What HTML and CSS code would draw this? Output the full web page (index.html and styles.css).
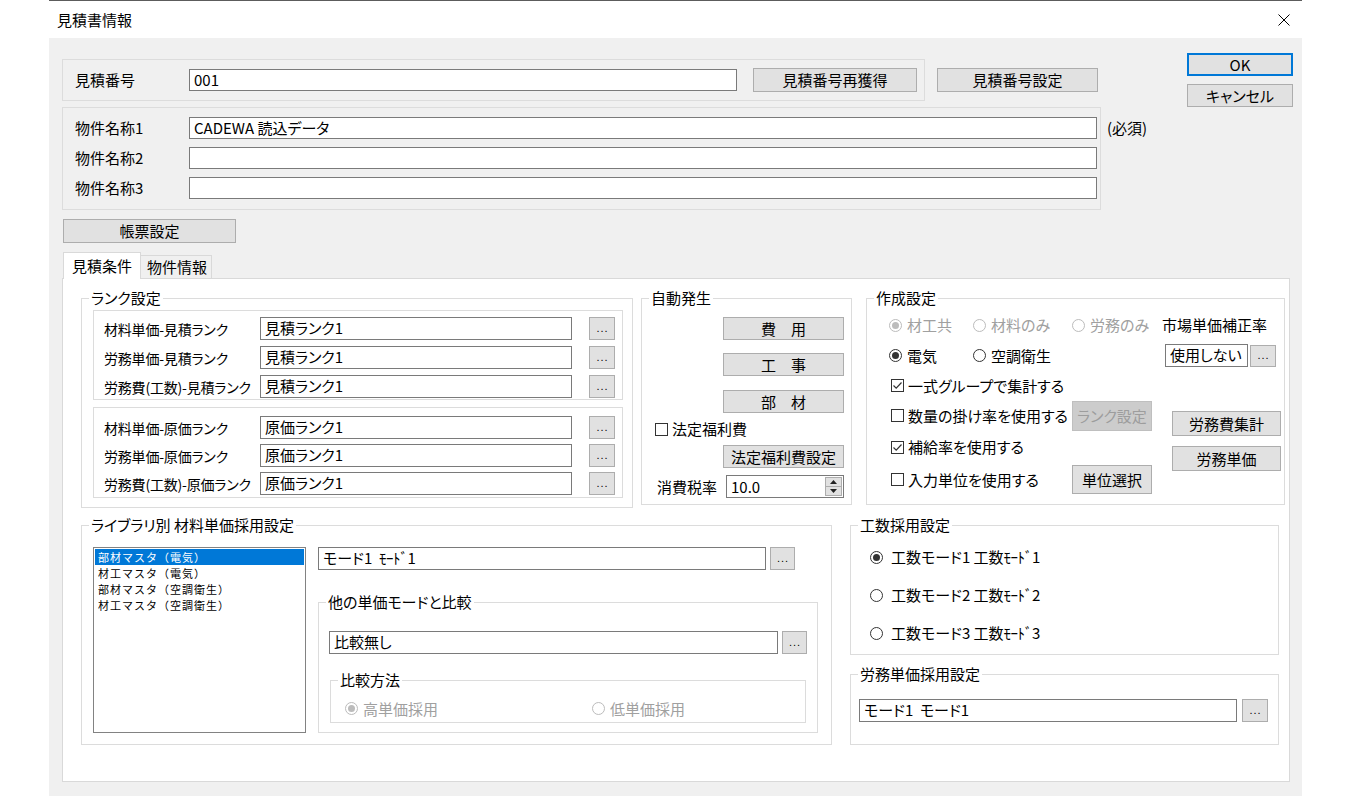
FILE: index.html
```html
<!DOCTYPE html>
<html lang="ja">
<head>
<meta charset="utf-8">
<title>見積書情報</title>
<link rel="stylesheet" href="styles.css">
</head>
<body>
<div class="window">
  <div class="titlebar">
    <span class="title">見積書情報</span>
    <svg class="close" width="12" height="12" viewBox="0 0 12 12"><path d="M0.5 0.5 L11.5 11.5 M11.5 0.5 L0.5 11.5" stroke="#000" stroke-width="1" fill="none"/></svg>
  </div>
  <div class="client">
    <div class="top">
      <div class="top-main">
        <div class="row-no">
          <div class="box box-no">
            <span class="lbl">見積番号</span>
            <div class="edit edit-no">001</div>
            <div class="btn btn-reget">見積番号再獲得</div>
          </div>
          <div class="btn btn-noset">見積番号設定</div>
        </div>
        <div class="row-name">
          <div class="box box-name">
            <div class="name-row"><span class="lbl">物件名称1</span><div class="edit edit-name">CADEWA 読込データ</div></div>
            <div class="name-row"><span class="lbl">物件名称2</span><div class="edit edit-name"></div></div>
            <div class="name-row"><span class="lbl">物件名称3</span><div class="edit edit-name"></div></div>
          </div>
          <span class="req">(必須)</span>
        </div>
        <div class="btn btn-form">帳票設定</div>
      </div>
      <div class="top-side">
        <div class="btn btn-ok">OK</div>
        <div class="btn btn-cancel">キャンセル</div>
      </div>
    </div>

    <div class="tabs">
      <div class="tab tab-active">見積条件</div>
      <div class="tab">物件情報</div>
    </div>

    <div class="pane">
      <div class="row1">
        <div class="group g-rank">
          <span class="gt">ランク設定</span>
          <div class="subbox sb-a">
            <div class="rrow"><span class="lbl">材料単価-見積ランク</span><div class="edit">見積ランク1</div><div class="ell">...</div></div>
            <div class="rrow"><span class="lbl">労務単価-見積ランク</span><div class="edit">見積ランク1</div><div class="ell">...</div></div>
            <div class="rrow"><span class="lbl">労務費(工数)-見積ランク</span><div class="edit">見積ランク1</div><div class="ell">...</div></div>
          </div>
          <div class="subbox sb-b">
            <div class="rrow"><span class="lbl">材料単価-原価ランク</span><div class="edit">原価ランク1</div><div class="ell">...</div></div>
            <div class="rrow"><span class="lbl">労務単価-原価ランク</span><div class="edit">原価ランク1</div><div class="ell">...</div></div>
            <div class="rrow"><span class="lbl">労務費(工数)-原価ランク</span><div class="edit">原価ランク1</div><div class="ell">...</div></div>
          </div>
        </div>

        <div class="group g-auto">
          <span class="gt">自動発生</span>
          <div class="btn bw">費　用</div>
          <div class="btn bw bw2">工　事</div>
          <div class="btn bw bw3">部　材</div>
          <span class="check chk-welfare"><i class="cb"></i>法定福利費</span>
          <div class="btn bw bw-welfare">法定福利費設定</div>
          <div class="tax">
            <span class="lbl">消費税率</span>
            <div class="spin">
              <span class="spin-text">10.0</span>
              <span class="spin-btns">
                <span class="sp-up"><svg width="7" height="4" viewBox="0 0 7 4"><path d="M0 4 L3.5 0 L7 4 Z" fill="#222"/></svg></span>
                <span class="sp-dn"><svg width="7" height="4" viewBox="0 0 7 4"><path d="M0 0 L3.5 4 L7 0 Z" fill="#222"/></svg></span>
              </span>
            </div>
          </div>
        </div>

        <div class="group g-make">
          <span class="gt">作成設定</span>
          <span class="radio dis checked r1c1"><i class="rb"></i>材工共</span>
          <span class="radio dis r1c2"><i class="rb"></i>材料のみ</span>
          <span class="radio dis r1c3"><i class="rb"></i>労務のみ</span>
          <span class="lbl r1c4">市場単価補正率</span>
          <span class="radio checked r2c1"><i class="rb"></i>電気</span>
          <span class="radio r2c2"><i class="rb"></i>空調衛生</span>
          <div class="market r2c4"><div class="edit">使用しない</div><div class="ell">...</div></div>
          <span class="check on r3"><i class="cb"><svg width="11" height="11" viewBox="0 0 11 11"><path d="M1.5 5.5 L4.2 8.2 L9.5 2.5" stroke="#333" stroke-width="1.2" fill="none"/></svg></i>一式グループで集計する</span>
          <span class="check r4"><i class="cb"></i>数量の掛け率を使用する</span>
          <div class="btn dis btn-rank r4c3">ランク設定</div>
          <span class="check on r5"><i class="cb"><svg width="11" height="11" viewBox="0 0 11 11"><path d="M1.5 5.5 L4.2 8.2 L9.5 2.5" stroke="#333" stroke-width="1.2" fill="none"/></svg></i>補給率を使用する</span>
          <span class="check r6"><i class="cb"></i>入力単位を使用する</span>
          <div class="btn btn-unit r6c3">単位選択</div>
          <div class="labor-btns">
            <div class="btn">労務費集計</div>
            <div class="btn">労務単価</div>
          </div>
        </div>
      </div>

      <div class="row2">
        <div class="group g-lib">
          <span class="gt">ライブラリ別 材料単価採用設定</span>
          <div class="listbox">
            <div class="li sel">部材マスタ（電気）</div>
            <div class="li">材工マスタ（電気）</div>
            <div class="li">部材マスタ（空調衛生）</div>
            <div class="li">材工マスタ（空調衛生）</div>
          </div>
          <div class="lib-right">
            <div class="mode-row"><div class="edit">モード1&nbsp;&nbsp;<span class="hw">ﾓｰﾄﾞ1</span></div><div class="ell">...</div></div>
            <div class="group g-compare">
              <span class="gt">他の単価モードと比較</span>
              <div class="cmp-row"><div class="edit">比較無し</div><div class="ell">...</div></div>
              <div class="group g-method">
                <span class="gt">比較方法</span>
                <span class="radio dis checked m1"><i class="rb"></i>高単価採用</span>
                <span class="radio dis"><i class="rb"></i>低単価採用</span>
              </div>
            </div>
          </div>
        </div>

        <div class="rcol">
          <div class="group g-kosu">
            <span class="gt">工数採用設定</span>
            <span class="radio checked"><i class="rb"></i>工数モード1 工数<span class="hw">ﾓｰﾄﾞ1</span></span>
            <span class="radio"><i class="rb"></i>工数モード2 工数<span class="hw">ﾓｰﾄﾞ2</span></span>
            <span class="radio"><i class="rb"></i>工数モード3 工数<span class="hw">ﾓｰﾄﾞ3</span></span>
          </div>
          <div class="group g-rodo">
            <span class="gt">労務単価採用設定</span>
            <div class="edit">モード1&nbsp;&nbsp;モード1</div>
            <div class="ell">...</div>
          </div>
        </div>
      </div>
    </div>
  </div>
</div>
</body>
</html>
```

FILE: styles.css
```css
* { box-sizing: border-box; }
html, body { margin: 0; padding: 0; }
body {
  background: #fff;
  font-family: "Noto Sans CJK JP", "Noto Sans", sans-serif;
  font-size: 15px;
  color: #000;
  font-feature-settings: "palt" 1;
}
i { font-style: normal; }
.hw { font-feature-settings: normal; letter-spacing: -0.5px; }

.window {
  margin-left: 49px;
  width: 1253px;
  height: 796px;
  border-top: 1px solid #5c5c5c;
  display: flex;
  flex-direction: column;
}
.titlebar {
  height: 37px;
  background: #fff;
  display: flex;
  align-items: center;
  justify-content: space-between;
  padding: 0 12px 0 8px;
}
.title { line-height: 20px; }
.close { display: block; }

.client {
  flex: 1;
  background: #f0f0f0;
  padding: 15px 0 0 13px;
}

/* top area */
.top { display: grid; grid-template-columns: 1125px 106px; }
.top-main { padding-top: 6px; }
.row-no { display: flex; align-items: center; }
.box { border: 1px solid #dcdcdc; }
.box-no {
  width: 863px; height: 42px;
  display: flex; align-items: center;
  padding-left: 12px;
}
.lbl { white-space: nowrap; line-height: 20px; }
.box-no .lbl, .name-row .lbl { width: 114px; }

.edit {
  background: #fff;
  border: 1px solid #7a7a7a;
  height: 22px;
  line-height: 20px;
  padding: 0 4px;
  white-space: nowrap;
  overflow: hidden;
}
.edit-no { width: 548px; }

.btn {
  background: #e1e1e1;
  border: 1px solid #adadad;
  display: flex;
  align-items: center;
  justify-content: center;
  white-space: nowrap;
  line-height: 20px;
}
.btn.dis { background: #cccccc; border-color: #bfbfbf; color: #9d9d9d; }
.btn-reget { width: 164px; height: 24px; margin-left: 16px; }
.btn-noset { width: 161px; height: 24px; margin-left: 12px; }

.row-name { display: flex; align-items: flex-start; margin-top: 6px; }
.box-name {
  width: 1039px; height: 103px;
  padding: 9px 0 0 12px;
  display: flex; flex-direction: column; gap: 8px;
}
.name-row { display: flex; align-items: center; }
.edit-name { width: 908px; }
.req { margin: 10px 0 0 6px; line-height: 22px; white-space: nowrap; }
.btn-form { width: 173px; height: 24px; margin: 9px 0 0 1px; }

.top-side { display: flex; flex-direction: column; gap: 8px; }
.btn-ok { height: 23px; border: 2px solid #0078d7; }
.btn-cancel { height: 23px; }

/* tabs */
.tabs {
  display: flex;
  align-items: flex-end;
  height: 26px;
  margin-top: 9px;
  padding-left: 1px;
  position: relative;
  z-index: 1;
}
.tab {
  height: 23px;
  width: 71px;
  border: 1px solid #d9d9d9;
  border-bottom: none;
  border-left: none;
  background: #f0f0f0;
  padding-left: 6px;
  line-height: 21px;
  white-space: nowrap;
}
.tab-active {
  height: 27px;
  width: 78px;
  margin-bottom: -1px;
  background: #fff;
  border-left: 1px solid #d9d9d9;
  padding-left: 8px;
  line-height: 25px;
}
.pane {
  width: 1228px;
  height: 504px;
  background: #fff;
  border: 1px solid #d9d9d9;
  padding: 19px 0 0 18px;
}

/* group boxes */
.group { position: relative; border: 1px solid #dcdcdc; background: #fff; }
.gt {
  position: absolute;
  left: 7px;
  top: -10px;
  line-height: 18px;
  padding: 0 2px;
  background: #fff;
  white-space: nowrap;
}

.row1 { display: flex; align-items: flex-start; }
.row2 { display: flex; align-items: flex-start; margin-top: 17px; }

/* ランク設定 */
.g-rank { width: 552px; height: 210px; padding: 11px 0 0 11px; }
.subbox { border: 1px solid #dcdcdc; width: 530px; display: flex; flex-direction: column; }
.sb-a { height: 90px; padding-top: 6px; gap: 6px; }
.sb-b { height: 91px; margin-top: 7px; padding-top: 8px; gap: 5px; }
.rrow { display: flex; align-items: center; height: 23px; }
.rrow .lbl { width: 166px; padding-left: 10px; font-size: 14px; letter-spacing: -0.2px; }
.rrow .edit { width: 312px; height: 23px; }
.rrow .ell { margin-left: 17px; }

.ell {
  width: 26px;
  height: 23px;
  background: #e1e1e1;
  border: 1px solid #adadad;
  font-family: "Liberation Sans", sans-serif;
  font-size: 11px;
  line-height: 1;
  letter-spacing: 1px;
  display: flex;
  align-items: flex-end;
  justify-content: center;
  padding: 0 0 5px 1px;
  color: #000;
}

/* 自動発生 */
.g-auto {
  width: 211px; height: 207px; margin-left: 8px;
  padding-top: 18px;
  display: flex; flex-direction: column; align-items: flex-start;
}
.g-auto .bw { margin-left: 81px; width: 121px; height: 23px; }
.g-auto .bw2 { margin-top: 13px; }
.g-auto .bw3 { margin-top: 14px; }
.chk-welfare { margin: 6px 0 0 13px; }
.g-auto .bw-welfare { margin-top: 6px; }
.tax { display: flex; align-items: center; margin: 7px 0 0 15px; }
.tax .lbl { width: 69px; }
.spin {
  width: 118px; height: 23px;
  display: flex;
  background: #fff;
  border: 1px solid #7a7a7a;
}
.spin-text { flex: 1; padding-left: 4px; line-height: 21px; }
.spin-btns {
  width: 17px;
  margin: 1px;
  display: flex;
  flex-direction: column;
  background: #e1e1e1;
  border: 1px solid #adadad;
}
.spin-btns span { flex: 1; display: flex; align-items: center; justify-content: center; }
.spin-btns .sp-up { border-bottom: 1px solid #adadad; }
.spin-btns svg { display: block; }

/* radio / check */
.radio, .check { display: inline-flex; align-items: center; white-space: nowrap; line-height: 20px; height: 20px; }
.rb {
  width: 13px; height: 13px;
  border: 1px solid #333;
  border-radius: 50%;
  background: #fff;
  margin-right: 5px;
  position: relative;
  flex: none;
  display: block;
}
.radio.checked .rb::after {
  content: "";
  position: absolute;
  left: 2px; top: 2px;
  width: 7px; height: 7px;
  border-radius: 50%;
  background: #333;
}
.radio.dis { color: #a0a0a0; }
.radio.dis .rb { border-color: #bcbcbc; }
.radio.dis.checked .rb::after { background: #bcbcbc; }
.cb {
  width: 13px; height: 13px;
  border: 1px solid #333;
  background: #fff;
  margin-right: 4px;
  flex: none;
  display: block;
}
.cb svg { display: block; }

/* 作成設定 */
.g-make {
  width: 419px; height: 207px; margin-left: 14px;
  padding: 11px 0 0 22px;
  display: grid;
  grid-template-columns: 84px 99px 90px 1fr;
  grid-template-rows: 30px 31px 29px 31px 32px 33px;
  align-items: center;
}
.r1c1 { grid-area: 1 / 1; }
.r1c2 { grid-area: 1 / 2; }
.r1c3 { grid-area: 1 / 3; }
.r1c4 { grid-area: 1 / 4; }
.r2c1 { grid-area: 2 / 1; }
.r2c2 { grid-area: 2 / 2; }
.r2c4 { grid-area: 2 / 4; }
.r3 { grid-area: 3 / 1 / 4 / 4; margin-left: 2px; }
.r4 { grid-area: 4 / 1 / 5 / 3; margin-left: 2px; }
.r4c3 { grid-area: 4 / 3; }
.r5 { grid-area: 5 / 1 / 6 / 3; margin-left: 2px; }
.r6 { grid-area: 6 / 1 / 7 / 3; margin-left: 2px; }
.r6c3 { grid-area: 6 / 3; }
.market { display: flex; align-items: center; margin-left: 3px; }
.market .edit { width: 83px; height: 23px; }
.market .ell { margin-left: 2px; height: 22px; }
.btn-rank { width: 80px; height: 30px; }
.btn-unit { width: 80px; height: 29px; }
.labor-btns {
  grid-area: 4 / 4 / 7 / 5;
  align-self: start;
  margin: 11px 0 0 10px;
  display: flex; flex-direction: column; gap: 10px;
}
.labor-btns .btn { width: 109px; height: 25px; }

/* ライブラリ別 */
.g-lib {
  width: 751px; height: 220px;
  padding: 21px 0 0 11px;
  display: flex; align-items: flex-start;
}
.listbox {
  width: 213px; height: 186px;
  border: 1px solid #828282;
  background: #fff;
  padding: 1px;
  font-size: 11px;
  letter-spacing: 1px;
  line-height: 16px;
  font-feature-settings: normal;
}
.li { padding-left: 3px; white-space: nowrap; height: 16px; }
.li.sel { background: #0078d7; color: #fff; }
.lib-right { margin-left: 12px; width: 500px; }
.mode-row { display: flex; align-items: center; }
.mode-row .edit { width: 448px; height: 23px; }
.mode-row .ell { margin-left: 4px; width: 25px; }
.g-compare { margin-top: 32px; width: 500px; height: 131px; padding: 28px 0 0 10px; }
.cmp-row { display: flex; align-items: center; }
.cmp-row .edit { width: 449px; height: 23px; }
.cmp-row .ell { margin-left: 4px; width: 25px; }
.g-method {
  margin: 26px 0 0 1px;
  width: 476px; height: 43px;
  padding: 14px 0 0 14px;
  display: flex; align-items: center;
}
.g-method .m1 { width: 247px; }

/* right column */
.rcol { margin-left: 18px; width: 429px; }
.g-kosu {
  height: 130px;
  padding: 21px 0 0 19px;
  display: flex; flex-direction: column; align-items: flex-start; gap: 18px;
}
.g-kosu .rb { margin-right: 8px; }
.g-rodo {
  margin-top: 19px;
  height: 71px;
  padding: 24px 0 0 8px;
  display: flex; align-items: flex-start;
}
.g-rodo .edit { width: 378px; height: 23px; }
.g-rodo .ell { margin-left: 5px; }
```
